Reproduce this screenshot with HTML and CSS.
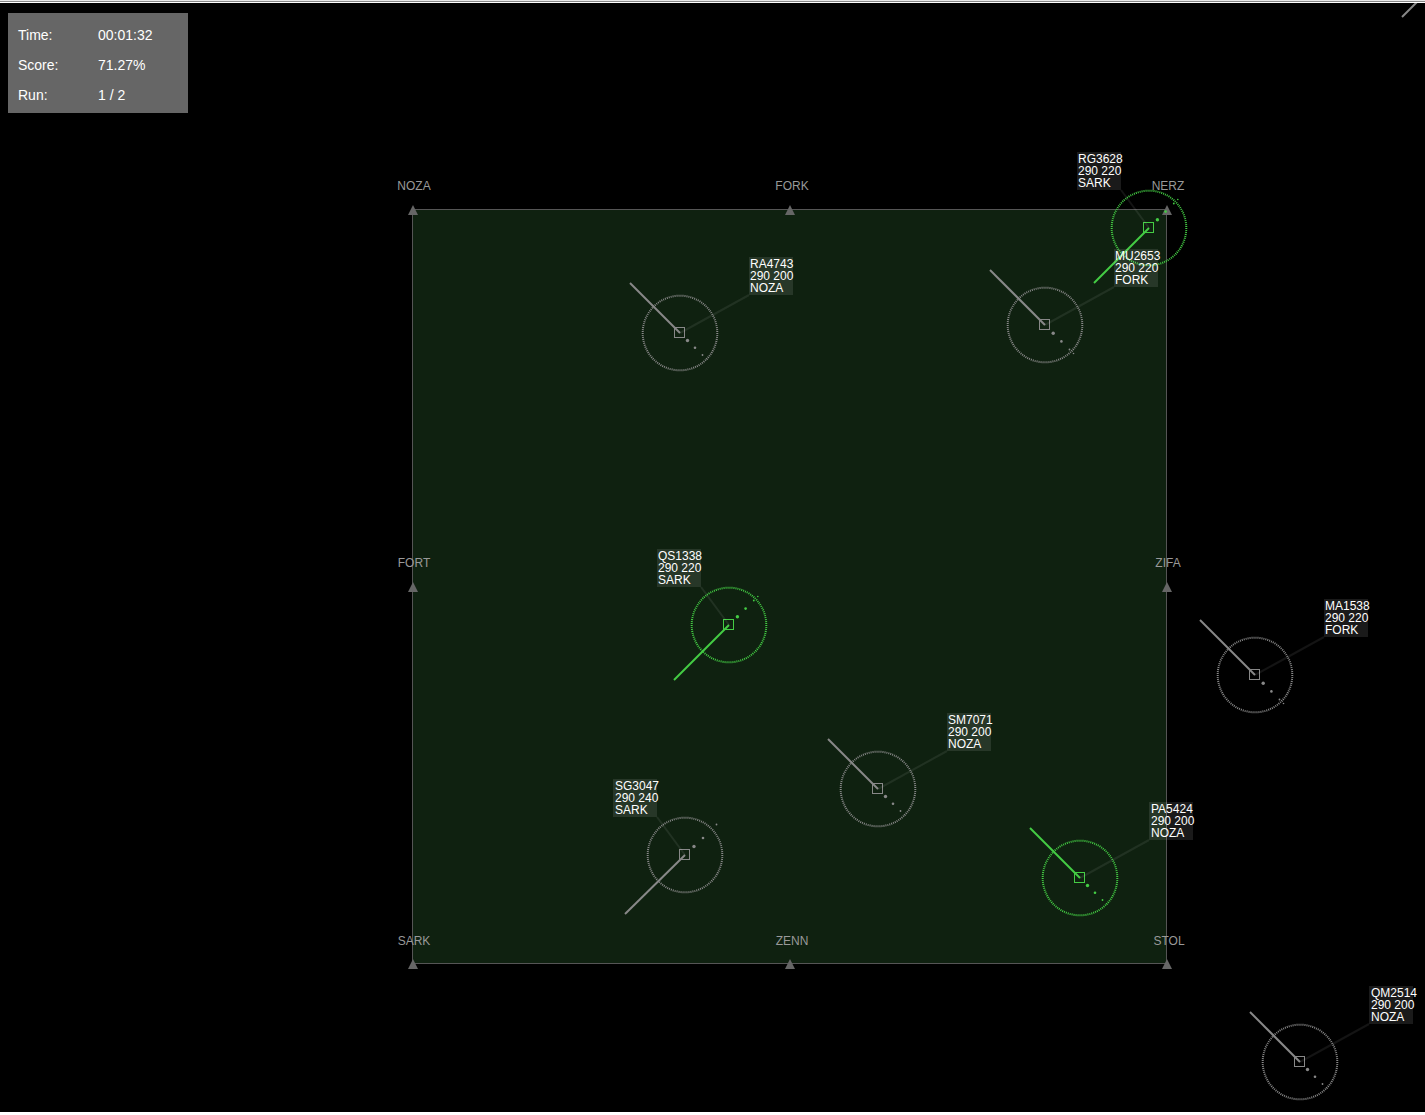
FILE: index.html
```html
<!DOCTYPE html>
<html lang="en">
<head>
<meta charset="utf-8">
<title>Sector radar</title>
<link rel="stylesheet" href="styles.css">
</head>
<body>
<main class="radar">
  <dl class="status">
    <dt>Time:</dt><dd>00:01:32</dd>
    <dt>Score:</dt><dd>71.27%</dd>
    <dt>Run:</dt><dd>1 / 2</dd>
  </dl>
  <svg class="scope" viewBox="0 3 1425 1109" role="img" aria-label="Radar scope">
    <defs>
      <g id="blip">
        <circle class="ring" cx="0" cy="0" r="37.3"/>
        <rect class="plot" x="-5.5" y="-5.5" width="10" height="10"/>
      </g>
      <!-- speed vector and history dots, one set per heading and speed -->
      <g id="nw200">
        <line class="vector" x1="0" y1="0" x2="-50" y2="-50"/>
        <circle cx="7.5" cy="7.5" r="1.7"/><circle cx="15" cy="14.7" r="1.3"/><circle cx="22.5" cy="22" r="0.9"/><circle cx="26" cy="26" r="0.5"/>
      </g>
      <g id="nw220">
        <line class="vector" x1="0" y1="0" x2="-55" y2="-55"/>
        <circle cx="8.2" cy="8.2" r="1.7"/><circle cx="16.4" cy="16.4" r="1.3"/><circle cx="24.5" cy="24.5" r="0.9"/><circle cx="28.5" cy="28.5" r="0.8"/>
      </g>
      <g id="sw220">
        <line class="vector" x1="0" y1="0" x2="-55" y2="55"/>
        <circle cx="8.4" cy="-8.2" r="1.7"/><circle cx="16.6" cy="-16.4" r="1.3"/><circle cx="24.8" cy="-24.5" r="0.9"/><circle cx="28.8" cy="-28.5" r="0.8"/>
      </g>
      <g id="sw240">
        <line class="vector" x1="0" y1="0" x2="-60" y2="59"/>
        <circle cx="9" cy="-8.5" r="1.7"/><circle cx="18" cy="-17" r="1.3"/><circle cx="31.5" cy="-30.5" r="0.9"/>
      </g>
      <g id="tag-east">
        <line class="leader" x1="0" y1="0" x2="69" y2="-38"/>
        <rect class="tag" x="69" y="-76" width="44" height="38"/>
      </g>
      <g id="tag-west">
        <line class="leader" x1="0" y1="0" x2="-28" y2="-38"/>
        <rect class="tag" x="-72" y="-76" width="44" height="38"/>
      </g>
      <path id="fix" d="M0-5L5 5H-5Z"/>
    </defs>

    <rect class="sector" x="412.5" y="209.5" width="754" height="754"/>

    <g class="fixes">
      <use href="#fix" x="413" y="210"/><use href="#fix" x="790" y="210"/><use href="#fix" x="1167" y="210"/>
      <use href="#fix" x="413" y="587"/><use href="#fix" x="1167" y="587"/>
      <use href="#fix" x="413" y="964"/><use href="#fix" x="790" y="964"/><use href="#fix" x="1167" y="964"/>
    </g>
    <g class="fix-names">
      <text x="414" y="190">NOZA</text><text x="792" y="190">FORK</text><text x="1168" y="190">NERZ</text>
      <text x="414" y="567">FORT</text><text x="1168" y="567">ZIFA</text>
      <text x="414" y="945">SARK</text><text x="792" y="945">ZENN</text><text x="1169" y="945">STOL</text>
    </g>

    <line class="vector" x1="1402" y1="17" x2="1420" y2="-1"/>

    <g class="aircraft active" transform="translate(1149 228)">
      <use href="#blip"/><use href="#sw220"/><use href="#tag-west"/>
      <text><tspan x="-71" y="-65">RG3628</tspan><tspan x="-71" y="-53">290 220</tspan><tspan x="-71" y="-41">SARK</tspan></text>
    </g>
    <g class="aircraft" transform="translate(680 333)">
      <use href="#blip"/><use href="#nw200"/><use href="#tag-east"/>
      <text><tspan x="70" y="-65">RA4743</tspan><tspan x="70" y="-53">290 200</tspan><tspan x="70" y="-41">NOZA</tspan></text>
    </g>
    <g class="aircraft" transform="translate(1045 325)">
      <use href="#blip"/><use href="#nw220"/><use href="#tag-east"/>
      <text><tspan x="70" y="-65">MU2653</tspan><tspan x="70" y="-53">290 220</tspan><tspan x="70" y="-41">FORK</tspan></text>
    </g>
    <g class="aircraft active" transform="translate(729 625)">
      <use href="#blip"/><use href="#sw220"/><use href="#tag-west"/>
      <text><tspan x="-71" y="-65">QS1338</tspan><tspan x="-71" y="-53">290 220</tspan><tspan x="-71" y="-41">SARK</tspan></text>
    </g>
    <g class="aircraft" transform="translate(1255 675)">
      <use href="#blip"/><use href="#nw220"/><use href="#tag-east"/>
      <text><tspan x="70" y="-65">MA1538</tspan><tspan x="70" y="-53">290 220</tspan><tspan x="70" y="-41">FORK</tspan></text>
    </g>
    <g class="aircraft" transform="translate(878 789)">
      <use href="#blip"/><use href="#nw200"/><use href="#tag-east"/>
      <text><tspan x="70" y="-65">SM7071</tspan><tspan x="70" y="-53">290 200</tspan><tspan x="70" y="-41">NOZA</tspan></text>
    </g>
    <g class="aircraft" transform="translate(685 855)">
      <use href="#blip"/><use href="#sw240"/><use href="#tag-west"/>
      <text><tspan x="-70" y="-65">SG3047</tspan><tspan x="-70" y="-53">290 240</tspan><tspan x="-70" y="-41">SARK</tspan></text>
    </g>
    <g class="aircraft active" transform="translate(1080 878)">
      <use href="#blip"/><use href="#nw200"/><use href="#tag-east"/>
      <text><tspan x="71" y="-65">PA5424</tspan><tspan x="71" y="-53">290 200</tspan><tspan x="71" y="-41">NOZA</tspan></text>
    </g>
    <g class="aircraft" transform="translate(1300 1062)">
      <use href="#blip"/><use href="#nw200"/><use href="#tag-east"/>
      <text><tspan x="71" y="-65">QM2514</tspan><tspan x="71" y="-53">290 200</tspan><tspan x="71" y="-41">NOZA</tspan></text>
    </g>
  </svg>
</main>
</body>
</html>
```
FILE: styles.css
```css
body {
  margin: 0;
  background: #fff;
  font-family: "Liberation Sans", Arial, sans-serif;
}

.radar {
  position: relative;
  padding: 3px 0;
  background: linear-gradient(#e8e8e8 1px, #888 1px, #888 2px, #fff 2px);
}

.scope {
  display: block;
  width: 100%;
  height: auto;
  background: #000;
  color: #888;
}

/* read-out panel laid over the scope */
.status {
  position: absolute;
  top: 13px;
  left: 8px;
  box-sizing: border-box;
  width: 180px;
  margin: 0;
  padding: 7px 10px 3px;
  display: grid;
  grid-template-columns: 80px 1fr;
  background: #666;
  color: #fff;
  font-size: 14px;
  line-height: 30px;
}

.status dd {
  margin: 0;
}

.sector {
  fill: #0f2110;
  stroke: #555;
}

.fixes {
  fill: #666;
}

.fix-names {
  fill: #999;
  font-size: 12px;
  text-anchor: middle;
}

.aircraft {
  color: #888;
  fill: currentColor;
  font-size: 12px;
}

.active {
  color: #44cc44;
}

.aircraft text {
  fill: #fff;
}

.vector {
  stroke: currentColor;
  stroke-width: 2;
}

.ring {
  fill: none;
  stroke: currentColor;
  stroke-width: 2;
  stroke-dasharray: 1 1;
}

.plot {
  fill: none;
  stroke: currentColor;
}

.leader {
  stroke: #fff;
  stroke-opacity: 0.08;
  stroke-width: 2;
}

.tag {
  fill: #fff;
  fill-opacity: 0.1;
}
```
